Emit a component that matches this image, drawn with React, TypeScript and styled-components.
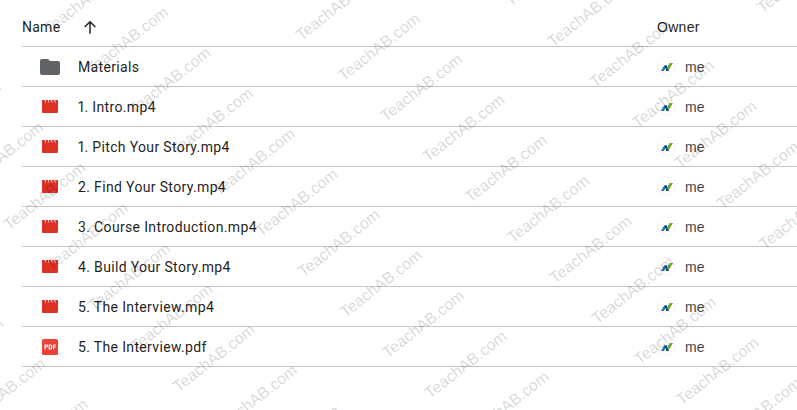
import React from "react";
import styled, { createGlobalStyle } from "styled-components";

const GlobalStyle = createGlobalStyle`
  html, body { margin: 0; padding: 0; background: #fff; }
  body { font-family: Roboto, "Liberation Sans", sans-serif; overflow: hidden; }
`;

const Page = styled.div`
  position: relative;
  width: 797px;
  height: 410px;
  overflow: hidden;
  padding: 7px 0 0 22px;
  box-sizing: border-box;
`;

const Row = styled.div`
  display: grid;
  grid-template-columns: 1fr 140px;
  height: 40px;
  align-items: center;
  border-bottom: 1px solid #c7c7c7;
  box-sizing: border-box;
  font-size: 14px;
  color: #1f1f1f;
`;

const NameHead = styled.div`
  display: flex;
  align-items: center;
  gap: 22px;
  letter-spacing: 0.25px;
`;

const NameCell = styled.div`
  display: flex;
  align-items: center;
  padding-left: 18px;
  gap: 18px;
  letter-spacing: 0.35px;
  font-variant-numeric: proportional-nums;
`;

const IconBox = styled.span`
  display: flex;
  width: 20px;
  height: 20px;
  align-items: center;
  justify-content: center;
`;

const OwnerHead = styled.div`
  font-family: "Liberation Sans", Arial, sans-serif;
  letter-spacing: 0.3px;
`;

const OwnerCell = styled.div`
  display: flex;
  align-items: center;
  gap: 9px;
  font-family: "Liberation Sans", Arial, sans-serif;
  color: #444746;
`;

const Avatar = styled.span`
  display: flex;
  width: 19px;
  height: 19px;
  box-sizing: border-box;
  align-items: center;
  justify-content: center;
  border-radius: 50%;
  border: 1px solid #f4f4f4;
  background: #fff;
`;

const Mark = styled.span`
  position: absolute;
  left: 0;
  top: 0;
  font-family: "Liberation Sans", Arial, sans-serif;
  font-size: 16px;
  line-height: 1;
  white-space: nowrap;
  color: rgba(0, 0, 0, 0.17);
  transform-origin: 0 100%;
  pointer-events: none;
`;

function FolderIcon() {
  return (
    <svg width="20" height="16" viewBox="0 0 20 16">
      <path fill="#5f6368" d="M2 0h6l2 2h8a2 2 0 0 1 2 2v10a2 2 0 0 1-2 2H2a2 2 0 0 1-2-2V2a2 2 0 0 1 2-2z" />
    </svg>
  );
}

function VideoIcon() {
  return (
    <svg width="16" height="13" viewBox="0 0 16 13">
      <path
        fill="#dd3026"
        d="M0 0h2.600l.9 2.500h.8L3.400 0h2.400l.9 2.500h.8L6.600 0H9l.9 2.500h.8L9.800 0h2.400l.9 2.500h.8L13 0h3v12a1 1 0 0 1-1 1H1a1 1 0 0 1-1-1z"
      />
    </svg>
  );
}

function PdfIcon() {
  return (
    <svg width="16" height="16" viewBox="0 0 16 16">
      <rect width="16" height="16" rx="1.500" fill="#ea4335" />
      <path
        fill="#fff"
        d="M2.500 5.500h2.300a1.200 1.200 0 0 1 0 2.900H3.600v2h-1.100zM3.600 6.500v1h1.100a.5.5 0 0 0 0-1zM6.700 5.500h1.900a1.800 1.800 0 0 1 1.800 1.800v1.300a1.800 1.800 0 0 1-1.800 1.800H6.700zM7.800 6.500v2.900h.8a.8.8 0 0 0 .8-.8V7.300a.8.8 0 0 0-.8-.8zM11 5.500h3v1h-1.900v1h1.600v1h-1.600v1.900H11z"
      />
    </svg>
  );
}

function OwnerLogo() {
  return (
    <svg width="12" height="8" viewBox="0 0 12 8">
      <path fill="#1b75bb" d="M0 8l3.200-5.500h2.600L3 8z" />
      <path fill="#123f6d" d="M3.400 2.500h2.400L8 8H5.400z" />
      <path fill="#6aa92f" d="M5.600 5.200L8.600 0H12L8 6.800z" />
    </svg>
  );
}

const files: { name: string; kind: "folder" | "video" | "pdf" }[] = [
  { name: "Materials", kind: "folder" },
  { name: "1. Intro.mp4", kind: "video" },
  { name: "1. Pitch Your Story.mp4", kind: "video" },
  { name: "2. Find Your Story.mp4", kind: "video" },
  { name: "3. Course Introduction.mp4", kind: "video" },
  { name: "4. Build Your Story.mp4", kind: "video" },
  { name: "5. The Interview.mp4", kind: "video" },
  { name: "5. The Interview.pdf", kind: "pdf" },
];

// watermark repeats on a slanted lattice
const marks: { x: number; y: number }[] = [];
for (let i = -3; i < 5; i++) {
  for (let j = -14; j < 14; j++) {
    const x = 305 + i * 209.5 + j * 42.3;
    const y = 280 - i * 34 + j * 40.5;
    if (x > -110 && x < 800 && y > -10 && y < 480) marks.push({ x, y });
  }
}

export default function App() {
  return (
    <Page>
      <GlobalStyle />
      <Row>
        <NameHead>
          Name
          <svg width="16" height="16" viewBox="0 0 24 24" fill="none" stroke="#1f1f1f" strokeWidth="2.200">
            <path d="M12 22V4M4 12l8-8 8 8" />
          </svg>
        </NameHead>
        <OwnerHead>Owner</OwnerHead>
      </Row>
      {files.map((f) => (
        <Row key={f.name}>
          <NameCell>
            <IconBox>
              {f.kind === "folder" && <FolderIcon />}
              {f.kind === "video" && <VideoIcon />}
              {f.kind === "pdf" && <PdfIcon />}
            </IconBox>
            {f.name}
          </NameCell>
          <OwnerCell>
            <Avatar>
              <OwnerLogo />
            </Avatar>
            me
          </OwnerCell>
        </Row>
      ))}
      {marks.map((m) => (
        <Mark key={`${m.x}-${m.y}`} style={{ transform: `translate(${m.x}px, ${m.y - 16}px) rotate(-38deg)` }}>
          TeachAB.com
        </Mark>
      ))}
    </Page>
  );
}
